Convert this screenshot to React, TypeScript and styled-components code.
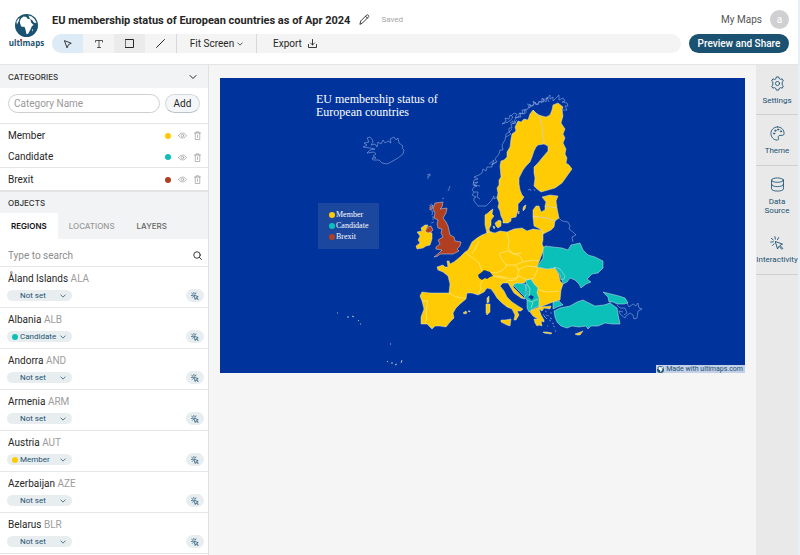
import React, { useState } from 'react';
import styled, { createGlobalStyle } from 'styled-components';

const YELLOW = '#ffcb05';
const TEAL = '#0bc0b8';
const RUST = '#b03f22';
const NAVY = '#1b5272';

const GlobalStyle = createGlobalStyle`
  * { box-sizing: border-box; }
  body { margin: 0; background: #f5f5f5; color: #262626; font-family: Roboto, "Liberation Sans", sans-serif; font-size: 10px; line-height: 12px; }
  button, input, select { font: inherit; color: inherit; margin: 0; padding: 0; border: 0; background: none; }
  button, select { cursor: pointer; }
  h1, h2, p, ul { margin: 0; padding: 0; }
  ul { list-style: none; }
  a { color: inherit; text-decoration: none; }
  svg { display: block; flex: none; }
`;

const Page = styled.div`
  display: flex;
  flex-direction: column;
  height: 100vh;
  overflow: hidden;
  border-right: 2px solid #e6effa;
`;

const Header = styled.header`
  display: flex;
  flex: none;
  height: 65px;
  padding-right: 9px;
  background: #fff;
  border-bottom: 1px solid #e4e5e6;
`;

const Brand = styled.a`
  display: flex;
  flex-direction: column;
  align-items: center;
  width: 53px;
  margin-right: -1px;
  padding-top: 14px;
`;

const BrandName = styled.span`
  font: bold 8px/12px "Open Sans", sans-serif;
  color: ${NAVY};
`;

const BrandLetter = styled.span`
  position: relative;
  &::after {
    content: '';
    position: absolute;
    left: 0;
    top: 2px;
    width: 2px;
    height: 2px;
    background: #d8432f;
  }
`;

const HeaderBody = styled.div`
  flex: 1;
  display: flex;
  flex-direction: column;
  gap: 5px;
  padding-top: 10px;
`;

const HeaderRow = styled.div`
  display: flex;
  align-items: center;
  height: 19px;
  gap: 9px;
`;

const Title = styled.h1`
  padding-top: 1px;
  font-size: 11px;
  line-height: 19px;
  font-weight: 700;
  white-space: nowrap;
`;

const Saved = styled.span`
  padding-left: 2px;
  font-size: 8px;
  color: #a5a5a5;
`;

const Account = styled.div`
  display: flex;
  align-items: center;
  gap: 8px;
  margin-left: auto;
  color: #555;
`;

const Avatar = styled.button`
  width: 19px;
  height: 19px;
  border-radius: 50%;
  background: #d0d0d2;
  color: #fff;
`;

const Toolbar = styled.div`
  display: flex;
  flex: 1;
  height: 19px;
  margin-right: -1px;
  border-radius: 10px;
  overflow: hidden;
  background: #f4f4f4;
`;

const Tool = styled.button<{ $bg?: string }>`
  display: flex;
  align-items: center;
  justify-content: center;
  width: 31px;
  background: ${(p) => p.$bg ?? 'transparent'};
`;

const ToolMenu = styled.button`
  display: flex;
  align-items: center;
  justify-content: center;
  gap: 3px;
  width: 81px;
  border-left: 1px solid #d8d8d8;
  border-right: 1px solid #d8d8d8;
  white-space: nowrap;
`;

const ExportButton = styled.button`
  display: flex;
  align-items: center;
  gap: 6px;
  padding-left: 16px;
`;

const Share = styled.button`
  width: 100px;
  height: 19px;
  border-radius: 10px;
  background: ${NAVY};
  color: #fff;
  font-weight: 500;
  white-space: nowrap;
`;

const Workspace = styled.div`
  display: flex;
  flex: 1;
  min-height: 0;
`;

const Sidebar = styled.aside`
  flex: none;
  width: 209px;
  overflow: hidden;
  background: #fff;
  border-right: 1px solid #dfe1e2;
`;

const SectionHead = styled.div<{ $tall?: boolean }>`
  display: flex;
  align-items: center;
  justify-content: space-between;
  height: ${(p) => (p.$tall ? 23 : 21)}px;
  padding: 0 11px 0 8px;
  background: #f2f3f4;
`;

const SectionTitle = styled.h2`
  font: 500 8px/12px Inter, sans-serif;
  color: #333;
`;

const AddForm = styled.form`
  display: flex;
  gap: 5px;
  height: 36px;
  padding: 6px 8px 0;
  border-bottom: 1px solid #e4e5e6;
`;

const NameInput = styled.input`
  flex: 1;
  min-width: 0;
  height: 19px;
  padding: 0 5px;
  border: 1px solid #ccd0d3;
  border-radius: 10px;
  &::placeholder { color: #999; opacity: 1; }
`;

const AddButton = styled.button`
  width: 35px;
  height: 19px;
  border: 1px solid #d3d8dc;
  border-bottom-color: #bcc3c8;
  border-radius: 10px;
  background: #f4f6f7;
`;

const CategoryList = styled.ul`
  border-bottom: 2px solid #e3e4e5;
`;

const Category = styled.li<{ $line?: boolean }>`
  display: flex;
  align-items: center;
  height: 22px;
  gap: 7px;
  padding: 1px 7px 0 8px;
  color: #999;
  border-bottom: ${(p) => (p.$line ? '1px solid #e4e5e6' : '0')};
`;

const CategoryName = styled.span`
  flex: 1;
  color: #262626;
`;

const Dot = styled.span<{ $color: string }>`
  flex: none;
  width: 6px;
  height: 6px;
  border-radius: 50%;
  background: ${(p) => p.$color};
`;

const IconButton = styled.button`
  display: flex;
`;

const Tabs = styled.div`
  display: flex;
  height: 26px;
  background: #f2f3f4;
`;

const Tab = styled.button<{ $active?: boolean; $muted?: boolean }>`
  padding: 0 11px;
  font: ${(p) => (p.$active ? 600 : 500)} 8px/12px Inter, sans-serif;
  color: ${(p) => (p.$active ? '#111' : p.$muted ? '#9a9a9a' : '#666')};
  background: ${(p) => (p.$active ? '#fff' : 'transparent')};
`;

const Search = styled.label`
  display: flex;
  align-items: center;
  height: 28px;
  padding: 6px 6px 0 8px;
  border-bottom: 1px solid #e4e5e6;
`;

const SearchInput = styled.input`
  flex: 1;
  min-width: 0;
  outline: 0;
  &::placeholder { color: #8c8c8c; opacity: 1; }
`;

const Region = styled.li`
  display: flex;
  flex-direction: column;
  gap: 4px;
  height: 41px;
  padding: 6px 4px 0 7px;
  border-bottom: 1px solid #e6e7e8;
`;

const RegionName = styled.p`
  padding-left: 1px;
`;

const Code = styled.span`
  color: #9c9c9c;
`;

const RegionControls = styled.div`
  display: flex;
  align-items: center;
  justify-content: space-between;
  height: 13px;
  color: ${NAVY};
`;

const Picker = styled.label`
  display: flex;
  align-items: center;
  gap: 2px;
  width: 65px;
  height: 11px;
  padding: 0 6px 0 5px;
  border-radius: 6px;
  background: #e8edf0;
`;

const Select = styled.select`
  appearance: none;
  flex: 1;
  min-width: 0;
  font-size: 8px;
  line-height: 11px;
  outline: 0;
`;

const Interact = styled.button`
  display: flex;
  align-items: center;
  justify-content: center;
  width: 18px;
  height: 13px;
  border-radius: 7px;
  background: #e8edf0;
`;

const Canvas = styled.main`
  flex: 1;
  min-width: 0;
  padding: 13px 11px;
`;

const MapFrame = styled.div`
  position: relative;
  background: #00349c;
  font-family: "Liberation Serif", serif;
  color: #fff;
`;

const MapTitle = styled.p`
  position: absolute;
  left: 96px;
  top: 15px;
  font-size: 12px;
  line-height: 13px;
`;

const Legend = styled.ul`
  position: absolute;
  left: 98px;
  top: 125px;
  width: 61px;
  height: 46px;
  padding: 6px 11px;
  background: #1c479f;
`;

const LegendItem = styled.li`
  display: flex;
  align-items: center;
  gap: 1px;
  height: 11px;
  font-size: 8px;
`;

const Credit = styled.a`
  position: absolute;
  right: 0;
  bottom: 0;
  display: flex;
  align-items: center;
  gap: 2px;
  height: 8px;
  padding: 0 2px 0 1px;
  background: #c3d0e8;
  color: ${NAVY};
  font: 7px/8px Roboto, sans-serif;
  white-space: nowrap;
`;

const Rail = styled.nav`
  flex: none;
  width: 42px;
  background: #e9e9ea;
`;

const RailItem = styled.button<{ $height: number; $line?: boolean }>`
  display: flex;
  flex-direction: column;
  align-items: center;
  gap: 5px;
  width: 100%;
  height: ${(p) => p.$height}px;
  padding-top: 11px;
  font-size: 8px;
  line-height: 9px;
  color: ${NAVY};
  border-bottom: ${(p) => (p.$line ? '1px solid #cfd0d2' : '0')};
`;

const stroke = { fill: 'none', stroke: 'currentColor', strokeLinecap: 'round', strokeLinejoin: 'round' } as const;

const Globe = ({ size }: { size: number }) => (
  <svg width={size} height={size} viewBox="0 0 24 24" aria-hidden="true">
    <circle cx="12" cy="12" r="12" fill={NAVY} />
    <path fill="#fff" d="M6.500 4.500 9 2.500l3 .5 1 2 3 .5 1 3.500 2.500 2.500-1.800 1-1.700 4-2.300 4-1.700.5-1-4.500-1-3-3.500-.5L5.500 10.500l-.5-3zM14 1.500l3.500 1 3 3 2 4-2.500-.5-2-2.500-2.500-1.500zM1.500 8l2-3 1.500-.5-1.500 3.500-1.500 3zM18 16l1 .3-1.200 2.200z" />
  </svg>
);

const Chevron = ({ size = 6 }: { size?: number }) => (
  <svg width={size} height={size} viewBox="0 0 8 8" {...stroke} aria-hidden="true"><path d="m1 2.500 3 3 3-3" /></svg>
);

const Eye = () => (
  <svg width="9" height="9" viewBox="0 0 18 18" {...stroke} strokeWidth="1.4" aria-hidden="true">
    <path d="M1 9c3.500-6.500 12.500-6.500 16 0-3.500 6.500-12.500 6.500-16 0z" /><circle cx="9" cy="9" r="2.500" />
  </svg>
);

const Trash = () => (
  <svg width="7" height="9" viewBox="0 0 14 18" {...stroke} strokeWidth="1.4" aria-hidden="true">
    <path d="M1 4h12M4.500 4V1.500h5V4M2.500 4v13h9V4M7 8v5" />
  </svg>
);

const Click = ({ size, weight = 1.3 }: { size: number; weight?: number }) => (
  <svg width={size} height={size} viewBox="0 0 20 20" {...stroke} strokeWidth={weight} aria-hidden="true">
    <path d="m8 8 10 3.600-4 2 4.400 4-1.400 1.400-4.200-4.400L11 18zM7 1l.7 3.500M2 3.400l2.700 2.200M1 8.700l3.600-.4M12.300 2.300l-1.600 3M3.500 13.500l2.300-2.300" />
  </svg>
);

const Pencil = () => (
  <svg width="11" height="11" viewBox="0 0 22 22" {...stroke} strokeWidth="1.8" aria-hidden="true">
    <path d="m2 20 1.400-6L15 2.400c1.200-1.200 2.600-.9 3.600.1s1.300 2.400.1 3.600L7.500 17.500zM13 4.500l4 4" />
  </svg>
);

const countries: { fill: string; d: string }[] = [
  // Sweden, Finland
  { fill: YELLOW, d: 'M533 110L530 114 528 120 524 119 521 122 518 121 515 127 516 131 512 134 511 139 510 147 507 152 507 157 504 160 501 161 500 166 501 177 499 180 499 185 497 188 498 193 497 198 499 203 498 207 500 211 501 216 503 220 503 223 508 223 511 221 511 218 516 217 518 210 518 204 522 200 524 197 522 195 520 190 519 184 519 178 523 170 526 166 530 162 532 157 534 151 536 147 538 145 544 144 543 130 540 118z' },
  { fill: YELLOW, d: 'M533 110L540 118 543 130 544 144 548 146 548 151 542 158 538 163 534 167 534 173 535 178 534 186 537 189 541 192 548 190 555 188 562 183 567 176 572 169 569 165 566 163 567 158 565 154 566 149 563 143 565 138 563 134 565 129 561 123 563 116 562 110 563 107 558 103 553 105 552 110 550 115 546 117 542 116 539 115 536 113z' },
  // Estonia, Latvia, Lithuania
  { fill: YELLOW, d: 'M542 197L550 195 558 196 556 201 557 207 556 210 551 207 545 206 546 202z' },
  { fill: YELLOW, d: 'M533 217L533 210 536 206 539 206 541 212 545 210 545 206 551 207 557 208 559 218 555 221 546 218 538 217z' },
  { fill: YELLOW, d: 'M533 217L538 217 546 218 555 221 554 227 551 230 543 234 540 229 534 226z' },
  // Central and western mainland
  { fill: YELLOW, d: 'M485 215L488 213 490 211 493 209 492 214 494 216 491 220 491 225 489 229 490 232 495 233 500 231 507 232 514 229 522 228 527 231 533 229 540 230 543 232 543 240 542 244 544 248 542 254 537 267 547 269 555 268 559 275 560 281 563 284 561 290 560 300 553 302 540 307 536 305 535 297 533 284 529 279 524 283 514 284 513 287 519 293 525 299 521 298 514 293 511 288 508 283 503 283 500 286 504 291 507 297 512 302 518 306 523 309 521 311 517 311 519 315 516 320 514 320 515 315 512 309 507 307 502 303 497 298 494 293 491 289 487 288 484 292 478 295 472 293 467 293 466 299 460 304 456 308 453 313 454 318 450 322 446 327 440 326 435 326 432 329 427 324 421 324 421 317 424 309 422 301 420 296 422 292 430 293 440 293 449 293 450 284 448 276 443 272 438 270 437 267 443 265 445 267 448 267 447 261 449 261 450 264 454 262 460 257 465 252 468 250 472 242 477 238 482 235 487 233 485 225z' },
  // Danish islands, Gotland, Corsica, Sardinia, Sicily, Balearics
  { fill: YELLOW, d: 'M495 223l4-3 2 1 0 5-3 2-2-2zM493 226l2 1-1 2zM523 208l1-2 2-1-1 4-2 2zM518 213l1-2 0 3zM487 298l2-2 0 6-2 1zM486 304l4 0 0 8-3 3-1-2zM501 320l4 0 6-1-1 7-3-1-6-3zM463 313l3-2 1 2-2 1zM468 311l2 0 0 1z' },
  // Greece, Crete, Cyprus
  { fill: YELLOW, d: 'M531 310l8-3 12-1-1 3-6-1-2 3-3-2 2 6 3 5 0 2-3-1 1 5-3-1-2 1-2-3-1-4 4 0-5-3-3-4zM543 332l4 0 5 1-1 1-7-1zM575 334l3-1 5-2-3 4-3 0zM550 318l2 1M552 323l2 1M544 316l3 3M547 326l1 0' },
  // Ireland
  { fill: YELLOW, d: 'M417 232l5-1-1-3 4-3 3 0-2 4 3 3 3 1 0 6-2 6-4 1-3 2-6 1-1-3 4-3-2-3 2-4z' },
  // Great Britain and Northern Ireland
  { fill: RUST, d: 'M435 203L443 202 442 207 440 209 447 208 446 213 443 218 446 222 448 226 450 235 454 237 455 241 461 242 460 246 457 249 459 251 453 254 440 254 438 256 434 257 439 253 442 250 436 249 436 247 440 244 438 240 443 237 441 233 442 229 438 228 437 224 438 220 434 218 435 213 433 209zM425 231L428 227 431 226 433 230 431 232 428 233zM430 207L433 205 432 209 430 210z' },
  // Ukraine and Moldova
  { fill: TEAL, d: 'M537 267L543 258 543 250 545 246 553 247 562 248 568 250 571 245 580 243 583 250 588 255 595 257 603 261 603 268 598 273 592 274 587 279 591 282 586 284 581 288 579 284 575 280 570 278 567 282 563 284 562 278 559 273 555 268 547 269z' },
  { fill: TEAL, d: 'M554 267l6 2 5 7-1 3-3 1-1-5z' },
  // Bosnia, Serbia, Montenegro, Albania, North Macedonia
  { fill: TEAL, d: 'M513 285l4-2 8 1 1 3 0 6 1 5-3-2-5-5z' },
  { fill: TEAL, d: 'M526 280l5-1 3 5 4 4-1 5 2 5 0 8-7 3-3 3-2-4 0-8-3-3 3-3-1-8z' },
  // Turkey
  { fill: TEAL, d: 'M553 302l6-1 4 4-6 2-4 2z' },
  { fill: TEAL, d: 'M554 311L560 308 570 306 577 302 583 300 589 303 595 306 604 305 610 303 617 308 618 314 620 324 612 324 605 323 598 326 591 326 588 329 586 326 579 327 572 326 567 328 561 326 557 322 555 317z' },
  // Georgia
  { fill: TEAL, d: 'M603 292l8 2 8 2 6 2 3 5-4 1-7 0-4-2-4 0-1-5z' },
];

const outlines = [
  // Norway
  'M497 197l-3 2 0-3-3 5-5 5-8 0-4-5 0-3 2-1-4-2 2-3-2-2 2-3 3-1-4-1 1-5 4-1-4-2 5-2 3-2 1-4 3 2 1-4 5 0 0-3 5-2-2-3 4-5 1-4 3 0-1-5 3-5 1-6 3-2 0-4 3 0-1-4 5-1-2-2 3-4 4 0-1-4 5 1-1-4 4-1 1-4 4 1 2-4 1 3 5-4 3 1-1-3 4 0 3-4 0 4 3-2 0 4 3-3 3-3 0 5 4-2 2 3-3 1 5 1 1 3-3 0 2 4-4 0-1 2',
  'M502 124l4-3-1-3 4 1 1-4 3 2-2 3-3 2zM511 116l3-3 3 1-2 4 4-1 0-4 4 1-1-4 4 0 0 3M510 123l3-2 0 3 4-4M512 129l-3 3 2 2-5 3M473 183l5-1-4 3 6 1M474 192l4 0-1 5 3 2M489 164l5-4-2 5 4-3M527 104l4 1-2 3 5-4-1-3 5 4 1-4 3 2 0-5 4 4 1-5 2 5',
  // Iceland
  'M363 147l4-2-3-2 5-1-2-4 3-1 2 2 1 3-2 3 4-1 2 3 1-5 3 2 2-4 2 3 3-2 3 2-1-4 4-2 2 3 2-2 1 5 4 3-1 2 2 2-1 4-5 4-7 4-4 2-5-1-3-3-6 0-1-2 4 0-3-2 3-2-2-2-7 1 3-3 5-1-5-1z',
  // Belarus, Armenia, Azerbaijan
  'M559 218l3 3 6 1 2 4-1 3 4 3 3 3-4 2 1 5',
  'M617 305l3 3 5 0 2 5-3 2M627 303l2 4 4-3 3 2 2-3 1 5 3 1-4 2-1 7-3 1-1-4-3-2-4 3-1 2-5-4-1-3 4 1',
  // Faroe, Shetland, Orkney, Hebrides, Aland
  'M427 175l3-1 0 2-2 0 0 3M449 189l1-3M448 191l1-2M442 199l2-1M429 206l3-2M431 211l2 0-1 4M433 216l0 4M431 223l3-1M528 190l2-1 1 2M534 189l1 2',
  // Aegean islands
  'M545 311l2 1M550 313l2 0M546 315l3 1M549 320l2 1M553 326l2 1M555 330l1 2M543 314l2 3',
];

const atlanticIslands =
  'M337 313l1 0M347 317l2 0M352 316l2 1M358 320l1 1M360 324l1 0M390 344l1 0M387 361l1 1M391 363l2 0M395 365l2-1M401 363l1-3';

const borders = [
  'M449 293l7 4 9 1M422 301l6 0-2 10 1 7-2 6M466 253l7 5 6 5 3 8M479 241l-4 8-3 5M486 232l6 0M507 232l2 9-1 8 6 5 7-1M500 253l8-2 6 3 6 2 3 6-8 3-9 0-5-7-2-5M523 262l10-2 6 1M507 265l-4 5-7 3-7-1M515 265l4 5-2 8-8 1-4-2-8-1M517 270l10-4 10 1M519 276l8 4 7-2 4-10M539 290l8 2 12-1M506 281l9-1 4-4M483 279l-3 6 1 4-3 5M493 276l5 1 8 2',
  'M527 284l3 5-1 8M527 300l4 2 7-3M533 302l-2 6',
];

const EuropeMap = () => (
  <svg width="100%" viewBox="220 78 525 295" role="img" aria-label="Map of Europe coloured by EU membership status">
    {countries.map((c) => (
      <path key={c.d} d={c.d} fill={c.fill} stroke="#d4e0e4" strokeWidth="0.5" strokeLinejoin="round" />
    ))}
    <path d={borders.join('')} fill="none" stroke="#fff2bd" strokeWidth="0.5" />
    <path d="M478 275l4-3 2-2 6 2 3 4-3 1-3 2-2-1-3 2-3-2zM528 297l3-2 3 2-2 3z" fill="#00349c" />
    <path d={outlines.join('')} fill="none" stroke="#a9bee8" strokeWidth="0.5" strokeLinejoin="round" />
    <path d={atlanticIslands} fill="none" stroke="#d6dfc8" strokeWidth="0.8" />
  </svg>
);

const categories = [
  { name: 'Member', color: YELLOW },
  { name: 'Candidate', color: TEAL },
  { name: 'Brexit', color: RUST },
];

const regions = [
  ['Åland Islands', 'ALA', ''],
  ['Albania', 'ALB', 'Candidate'],
  ['Andorra', 'AND', ''],
  ['Armenia', 'ARM', ''],
  ['Austria', 'AUT', 'Member'],
  ['Azerbaijan', 'AZE', ''],
  ['Belarus', 'BLR', ''],
];

const RegionRow = ({ name, code, initial }: { name: string; code: string; initial: string }) => {
  const [value, setValue] = useState(initial);
  const color = categories.find((c) => c.name === value)?.color ?? 'transparent';
  return (
    <Region>
      <RegionName>{name} <Code>{code}</Code></RegionName>
      <RegionControls>
        <Picker>
          <Dot $color={color} />
          <Select aria-label={`Category of ${name}`} value={value} onChange={(e) => setValue(e.target.value)}>
            <option value="">Not set</option>
            {categories.map((c) => <option key={c.name}>{c.name}</option>)}
          </Select>
          <Chevron />
        </Picker>
        <Interact aria-label={`Interactivity of ${name}`}><Click size={8} weight={1.8} /></Interact>
      </RegionControls>
    </Region>
  );
};

export default function App() {
  return (
    <Page>
      <GlobalStyle />
      <Header>
        <Brand href="#home">
          <Globe size={23} />
          <BrandName>ult<BrandLetter>i</BrandLetter>maps</BrandName>
        </Brand>
        <HeaderBody>
          <HeaderRow>
            <Title>EU membership status of European countries as of Apr 2024</Title>
            <IconButton aria-label="Rename"><Pencil /></IconButton>
            <Saved>Saved</Saved>
            <Account>
              <a href="#maps">My Maps</a>
              <Avatar aria-label="Account">a</Avatar>
            </Account>
          </HeaderRow>
          <HeaderRow>
            <Toolbar>
              <Tool $bg="#dcebf5" aria-label="Select">
                <svg width="8" height="8" viewBox="0 0 16 16" {...stroke} strokeWidth="1.8"><path d="m1.500 1.500 13 5-5.500 2.600L6.400 15z" /></svg>
              </Tool>
              <Tool aria-label="Text">
                <svg width="8" height="8" viewBox="0 0 16 16" {...stroke} strokeWidth="1.5"><path d="M1 4V1h14v3M8 1v14M5 15h6" /></svg>
              </Tool>
              <Tool $bg="#ebebeb" aria-label="Rectangle">
                <svg width="9" height="9" viewBox="0 0 9 9" {...stroke}><path d="M.5.5h8v8h-8z" /></svg>
              </Tool>
              <Tool aria-label="Line">
                <svg width="9" height="9" viewBox="0 0 9 9" {...stroke}><path d="m.5 8.500 8-8" /></svg>
              </Tool>
              <ToolMenu>Fit Screen <Chevron /></ToolMenu>
              <ExportButton>
                Export
                <svg width="9" height="9" viewBox="0 0 18 18" {...stroke} strokeWidth="1.8"><path d="M9 1v11M5 8l4 4 4-4M1 11v6h16v-6" /></svg>
              </ExportButton>
            </Toolbar>
            <Share>Preview and Share</Share>
          </HeaderRow>
        </HeaderBody>
      </Header>
      <Workspace>
        <Sidebar>
          <SectionHead $tall>
            <SectionTitle>CATEGORIES</SectionTitle>
            <IconButton aria-label="Collapse categories"><Chevron size={8} /></IconButton>
          </SectionHead>
          <AddForm onSubmit={(e) => e.preventDefault()}>
            <NameInput aria-label="Category Name" placeholder="Category Name" />
            <AddButton>Add</AddButton>
          </AddForm>
          <CategoryList>
            {categories.map((c) => (
              <Category key={c.name} $line={c.name === 'Candidate'}>
                <CategoryName>{c.name}</CategoryName>
                <Dot $color={c.color} />
                <IconButton aria-label={`Hide ${c.name}`}><Eye /></IconButton>
                <IconButton aria-label={`Delete ${c.name}`}><Trash /></IconButton>
              </Category>
            ))}
          </CategoryList>
          <SectionHead><SectionTitle>OBJECTS</SectionTitle></SectionHead>
          <Tabs role="tablist">
            <Tab role="tab" aria-selected="true" $active>REGIONS</Tab>
            <Tab role="tab" $muted>LOCATIONS</Tab>
            <Tab role="tab">LAYERS</Tab>
          </Tabs>
          <Search>
            <SearchInput aria-label="Search regions" placeholder="Type to search" />
            <svg width="9" height="9" viewBox="0 0 18 18" {...stroke} strokeWidth="1.8"><circle cx="8" cy="8" r="6.5" /><path d="m13 13 4 4" /></svg>
          </Search>
          <ul>
            {regions.map(([name, code, initial]) => <RegionRow key={code} name={name} code={code} initial={initial} />)}
          </ul>
        </Sidebar>
        <Canvas>
          <MapFrame>
            <EuropeMap />
            <MapTitle>EU membership status of<br />European countries</MapTitle>
            <Legend>
              {categories.map((c) => <LegendItem key={c.name}><Dot $color={c.color} />{c.name}</LegendItem>)}
            </Legend>
            <Credit href="#ultimaps"><Globe size={7} />Made with ultimaps.com</Credit>
          </MapFrame>
        </Canvas>
        <Rail>
          <RailItem $height={50} $line>
            <svg width="15" height="15" viewBox="0 0 24 24" {...stroke} strokeWidth="1.4">
              <path d="M9.600 3.900 10 1.500h4l.4 2.400 2.700 1.500 2.300-.9 2 3.500-1.900 1.500v5l1.900 1.500-2 3.500-2.300-.9-2.700 1.500-.4 2.400h-4l-.4-2.400-2.700-1.500-2.300.9-2-3.500 1.900-1.500v-5L2.600 8l2-3.500 2.300.9z" /><circle cx="12" cy="12" r="3.300" />
            </svg>
            Settings
          </RailItem>
          <RailItem $height={51} $line>
            <svg width="15" height="15" viewBox="0 0 24 24" {...stroke} strokeWidth="1.4">
              <path d="M12 1.500C6 1.500 1.500 6.200 1.500 12S6 22.500 11.500 22.500c2.500 0 2.800-1.700 2-3.300-1-2 .2-4.200 2.500-4.200h3.500c2 0 3-1.200 3-3.200C22.500 5.800 18 1.500 12 1.500z" />
              <circle cx="6.500" cy="12" r="1" /><circle cx="8.500" cy="7.500" r="1" /><circle cx="13" cy="5.700" r="1" /><circle cx="17.500" cy="8.500" r="1" />
            </svg>
            Theme
          </RailItem>
          <RailItem $height={59}>
            <svg width="15" height="15" viewBox="0 0 24 24" {...stroke} strokeWidth="1.4">
              <ellipse cx="12" cy="5" rx="9.500" ry="3.500" /><path d="M2.500 5v14c0 4.700 19 4.700 19 0V5M2.500 12c0 4.700 19 4.700 19 0" />
            </svg>
            <span>Data<br />Source</span>
          </RailItem>
          <RailItem $height={50} $line><Click size={14} />Interactivity</RailItem>
        </Rail>
      </Workspace>
    </Page>
  );
}
